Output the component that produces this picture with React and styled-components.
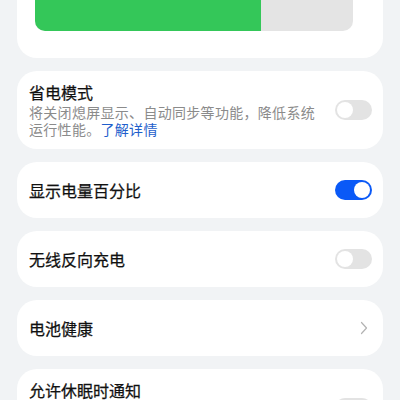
import React from "react";
import styled, { createGlobalStyle } from "styled-components";

const GlobalStyle = createGlobalStyle`
  html, body {
    margin: 0;
    padding: 0;
    background: #f1f3f5;
  }
  body {
    font-family: "Noto Sans CJK SC", "Noto Sans", sans-serif;
    color: #191919;
  }
`;

const Screen = styled.div`
  width: 400px;
  height: 400px;
  overflow: hidden;
`;

const List = styled.div`
  display: flex;
  flex-direction: column;
  gap: 13px;
  padding: 0 17px;
  margin-top: -40px;
`;

const Card = styled.div`
  background: #ffffff;
  border-radius: 20px;
`;

const BatteryCard = styled(Card)`
  padding: 20px 30px 27px 18px;
`;

const Bar = styled.div`
  height: 51px;
  border-radius: 10px;
  background: #e4e4e4;
  overflow: hidden;
  display: flex;
`;

const BarFill = styled.div`
  background: #34c759;
  height: 100%;
`;

const Row = styled(Card)`
  display: flex;
  align-items: center;
  gap: 16px;
  min-height: 56px;
  box-sizing: border-box;
  padding: ${(p) => (p.$tall ? "11px 11px 12px 12px" : "0 11px 0 12px")};
`;

const Texts = styled.div`
  flex: 1;
  display: flex;
  flex-direction: column;
  gap: 2px;
`;

const Title = styled.div`
  font-size: 16px;
  line-height: 20px;
  color: #111111;
  -webkit-text-stroke: 0.25px #111111;
`;

const Desc = styled.div`
  font-size: 14px;
  letter-spacing: 0.3px;
  line-height: 16.5px;
  color: #8b8b8b;
`;

const Link = styled.span`
  color: #1f5fcc;
`;

const Track = styled.div`
  width: 37px;
  height: 20px;
  border-radius: 10px;
  flex-shrink: 0;
  box-sizing: border-box;
  padding: 2px;
  display: flex;
  justify-content: ${(p) => (p.$on ? "flex-end" : "flex-start")};
  background: ${(p) => (p.$on ? "#0a59f7" : "#e3e3e3")};
`;

const Knob = styled.div`
  width: 16px;
  height: 16px;
  border-radius: 50%;
  background: #ffffff;
`;

const Chevron = styled.svg`
  flex-shrink: 0;
  margin-right: 4px;
`;

const Toggle = ({ on }) => (
  <Track $on={on}>
    <Knob />
  </Track>
);

const App = () => (
  <Screen>
    <GlobalStyle />
    <List>
      <BatteryCard>
        <Bar>
          <BarFill style={{ width: "71%" }} />
        </Bar>
      </BatteryCard>

      <Row $tall>
        <Texts>
          <Title>省电模式</Title>
          <Desc>
            将关闭熄屏显示、自动同步等功能，降低系统运行性能。<Link>了解详情</Link>
          </Desc>
        </Texts>
        <Toggle on={false} />
      </Row>

      <Row>
        <Texts>
          <Title>显示电量百分比</Title>
        </Texts>
        <Toggle on />
      </Row>

      <Row>
        <Texts>
          <Title>无线反向充电</Title>
        </Texts>
        <Toggle on={false} />
      </Row>

      <Row>
        <Texts>
          <Title>电池健康</Title>
        </Texts>
        <Chevron width="8" height="14" viewBox="0 0 8 14">
          <path d="M1.5 1.5 L6.5 7 L1.5 12.5" fill="none" stroke="#b3b3b3" strokeWidth="1.2" strokeLinecap="round" strokeLinejoin="round" />
        </Chevron>
      </Row>

      <Row $tall>
        <Texts>
          <Title>允许休眠时通知</Title>
          <Desc>开启后，设备休眠时仍可接收消息通知，可能会增加耗电</Desc>
        </Texts>
        <Toggle on={false} />
      </Row>
    </List>
  </Screen>
);

export default App;
